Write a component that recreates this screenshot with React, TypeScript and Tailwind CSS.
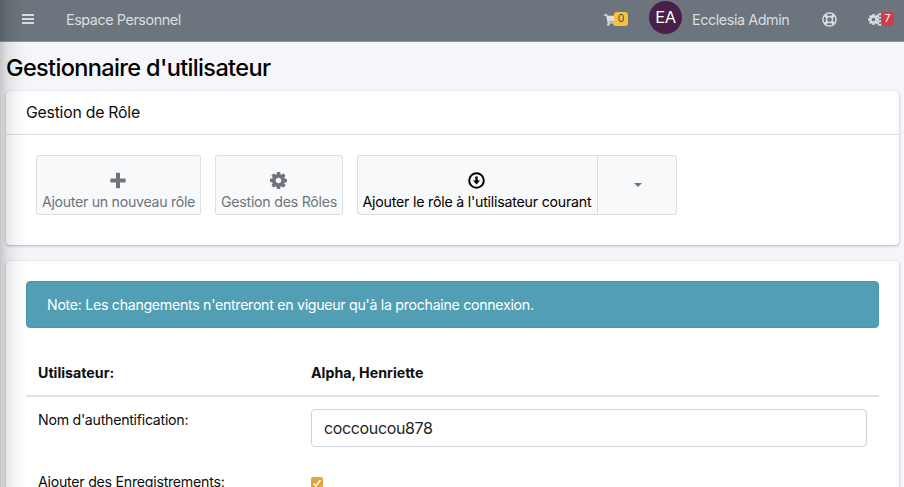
import React from "react";
import { FaShoppingCart, FaRegLifeRing } from "react-icons/fa";

const COG =
  "M1152 896q0-106-75-181t-181-75-181 75-75 181 75 181 181 75 181-75 75-181zm512-109v222q0 12-8 23t-20 13l-185 28q-19 54-39 91 35 50 107 138 10 12 10 25t-9 23q-27 37-99 108t-94 71q-12 0-26-9l-138-108q-44 23-91 38-16 136-29 186-7 28-36 28h-222q-14 0-24.5-8.5t-11.5-21.5l-28-184q-49-16-90-37l-141 107q-10 9-25 9-14 0-25-11-126-114-165-168-7-10-7-23 0-12 8-23 15-21 51-66.5t54-70.5q-27-50-41-99l-183-27q-13-2-21-12.5t-8-23.5v-222q0-12 8-23t19-13l186-28q14-46 39-92-40-57-107-138-10-12-10-24 0-10 9-23 26-36 98.5-107.5t94.5-71.5q13 0 26 10l138 107q44-23 91-38 16-136 29-186 7-28 36-28h222q14 0 24.5 8.5t11.5 21.5l28 184q49 16 90 37l142-107q9-9 24-9 13 0 25 10 129 119 165 170 7 8 7 22 0 12-8 23-15 21-51 66.5t-54 70.5q26 50 41 98l183 28q13 2 21 12.5t8 23.5z";

function Cog({ className }: { className: string }) {
  return (
    <svg viewBox="128 128 1536 1536" fill="currentColor" className={className}>
      <path d={COG} />
    </svg>
  );
}

function Navbar() {
  return (
    <header className="flex h-[42px] items-start border-b border-[#8f969c] bg-[#6c757d] text-[14.4px] leading-[20px] text-[#dadcde]">
      <svg viewBox="0 0 12 11" className="mt-[14px] ml-[22px] h-[11px] w-[12px]" fill="currentColor">
        <path d="M0 0h12v2H0zM0 4h12v2H0zM0 8h12v2H0z" />
      </svg>
      <span className="mt-[10px] ml-8 w-[118px] whitespace-nowrap tracking-[-0.45px]">Espace Personnel</span>
      <div className="relative mt-[14px] ml-auto h-3 w-[46px] shrink-0">
        <FaShoppingCart className="h-3 w-[13px]" />
        <span className="absolute -top-[2px] left-[10px] flex h-[14px] w-[14px] items-center justify-center rounded-[3px] bg-[#f6c23e] text-[10.5px] leading-none text-[#454b50]">0</span>
      </div>
      <span className="mt-px -ml-px flex h-[33px] w-[33px] shrink-0 items-center justify-center rounded-full bg-[#48204a] text-[16.5px] leading-none tracking-[-0.5px] text-white">EA</span>
      <span className="mt-[10px] ml-[10px] w-[130px] shrink-0 whitespace-nowrap tracking-[-0.44px]">Ecclesia Admin</span>
      <FaRegLifeRing className="mt-[12px] h-[15px] w-[15px] shrink-0" />
      <div className="relative mt-[13px] mr-[10px] ml-[31px] h-[13px] w-[26px] shrink-0">
        <Cog className="mt-px h-[11px] w-[11px]" />
        <Cog className="absolute top-0 left-[9px] h-[6px] w-[6px]" />
        <Cog className="absolute top-[7px] left-[9px] h-[6px] w-[6px]" />
        <span className="absolute -top-px left-[13px] flex h-[14px] w-[13px] items-center justify-center rounded-[3px] bg-[#cf3e48] text-[10.5px] leading-none text-white">7</span>
      </div>
    </header>
  );
}

function RoleCard() {
  const button = "flex h-[60px] flex-col items-center border border-[#dddddd] bg-[#f8f9fa] pt-[16px] text-[14.2px] leading-[20px] whitespace-nowrap";
  return (
    <section className="h-[154px] rounded-[4px] bg-white shadow-[0_0_1px_rgba(0,0,0,0.13),0_1px_3px_rgba(0,0,0,0.25)]">
      <h2 className="h-[44px] border-b border-[#dfdfdf] pt-[11px] pl-5 text-[15.8px] leading-[22px] tracking-[-0.23px]">Gestion de Rôle</h2>
      <div className="flex pt-5 pl-[30px]">
        <button className={`${button} w-[165px] rounded-[3px] text-[#6c757d]`}>
          <svg viewBox="0 0 16 16" className="mr-px h-[17px] w-[16px]" fill="currentColor">
            <path d="M6 1a.7.7 0 0 1 .7-.7h2.6a.7.7 0 0 1 .7.7v5h5a.7.7 0 0 1 .7.7v2.6a.7.7 0 0 1-.7.7h-5v5a.7.7 0 0 1-.7.7H6.700a.7.7 0 0 1-.7-.7v-5H1a.7.7 0 0 1-.7-.7V6.700A.7.7 0 0 1 1 6h5z" />
          </svg>
          <span className="mt-[3px] tracking-[-0.3px]">Ajouter un nouveau rôle</span>
        </button>
        <button className={`${button} ml-[14px] w-[128px] rounded-[3px] text-[#6c757d]`}>
          <Cog className="mr-px h-[17px] w-[17px]" />
          <span className="mt-[3px] tracking-[-0.25px]">Gestion des Rôles</span>
        </button>
        <button className={`${button} ml-[14px] w-[241px] rounded-l-[3px] text-black`}>
          <svg viewBox="0 0 17 17" className="mr-[2px] h-[17px] w-[17px]">
            <circle cx="8.500" cy="8.500" r="7.300" fill="none" stroke="currentColor" strokeWidth="2" />
            <path d="M7.300 4.500h2.400v4H12l-3.500 4-3.500-4h2.300z" fill="currentColor" />
          </svg>
          <span className="mt-[3px] mr-px tracking-[-0.22px]">Ajouter le rôle à l'utilisateur courant</span>
        </button>
        <button aria-label="Menu" className="-ml-px flex h-[60px] w-[80px] items-center justify-center rounded-r-[3px] border border-[#dddddd] bg-[#f8f9fa]">
          <svg viewBox="0 0 8 4" className="ml-px h-1 w-2 text-[#6c757d]" fill="currentColor">
            <path d="M0 0h8L4 4z" />
          </svg>
        </button>
      </div>
    </section>
  );
}

function UserCard() {
  return (
    <section className="mt-4 h-[260px] rounded-t-[4px] bg-white px-5 pt-5 text-[14.2px] leading-[20px] shadow-[0_0_1px_rgba(0,0,0,0.13),0_1px_3px_rgba(0,0,0,0.25)]">
      <div className="h-[47px] rounded-[4px] border border-[#4899af] bg-[#529fb5] pt-[13px] pl-5 tracking-[-0.3px] text-white">Note: Les changements n'entreront en vigueur qu'à la prochaine connexion.</div>
      <div className="mt-[25px] grid h-[44px] grid-cols-[285px_1fr] border-b-2 border-[#dee2e6] pt-[10px] font-bold">
        <span className="pl-3">Utilisateur:</span>
        <span>Alpha, Henriette</span>
      </div>
      <div className="grid h-[62px] grid-cols-[285px_1fr] pt-3 pr-3">
        <label htmlFor="login" className="pt-[1px] pl-3 tracking-[-0.28px]">Nom d'authentification:</label>
        <input id="login" defaultValue="coccoucou878" className="h-[38px] w-full rounded-[4px] border border-[#ced4da] bg-white px-3 text-[16px] tracking-[-0.36px] text-[#212529]" />
      </div>
      <div className="grid grid-cols-[285px_1fr] pt-[13px]">
        <span className="pl-3 tracking-[-0.26px]">Ajouter des Enregistrements:</span>
        <span className="mt-[5px] flex h-3 w-3 items-center justify-center rounded-[2px] bg-[#e0a53c]">
          <svg viewBox="0 0 12 12" className="h-3 w-3" fill="none" stroke="white" strokeWidth="1.500">
            <path d="M2.700 6.500 5 9l4.500-6" />
          </svg>
        </span>
      </div>
    </section>
  );
}

export default function App() {
  return (
    <div className="relative h-[487px] w-[904px] overflow-hidden bg-[#f4f6f9] font-['Inter','Liberation_Sans',sans-serif] text-[#0c0e10]">
      <Navbar />
      <main className="pr-[5px] pl-[6px]">
        <h1 className="h-[49px] pt-[11px] text-[23.5px] leading-[30px] font-medium tracking-[-0.64px] whitespace-nowrap text-black">Gestionnaire d'utilisateur</h1>
        <RoleCard />
        <UserCard />
      </main>
      <div className="pointer-events-none absolute inset-y-0 left-0 w-7 bg-[linear-gradient(to_right,rgba(0,0,0,0.19),rgba(0,0,0,0.09)_25%,rgba(0,0,0,0.03)_60%,transparent)]" />
    </div>
  );
}
